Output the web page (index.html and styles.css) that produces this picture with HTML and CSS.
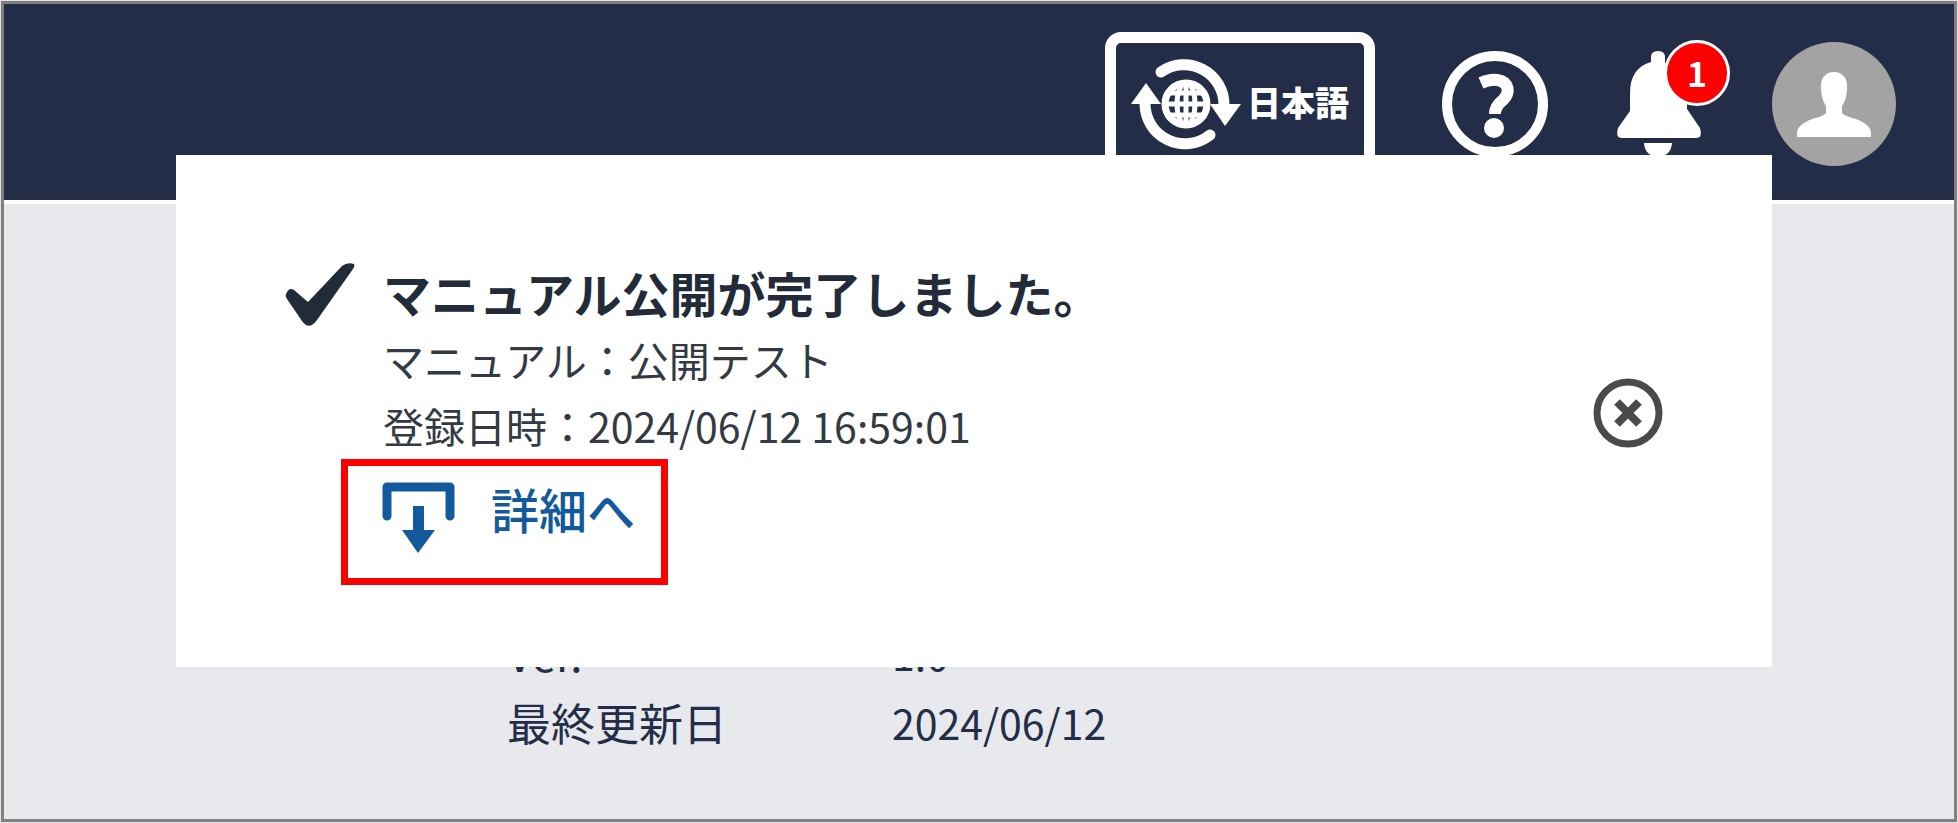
FILE: index.html
```
<!DOCTYPE html>
<html lang="ja">
<head>
<meta charset="utf-8">
<meta name="viewport" content="width=device-width, initial-scale=1">
<title>マニュアル公開</title>
<link rel="stylesheet" href="styles.css">
</head>
<body>
<div class="app">
  <header class="topbar">
    <button class="lang" type="button">
      <svg class="lang-icon" viewBox="0 0 110 92" aria-hidden="true">
        <g fill="none" stroke="#fff">
          <path d="M30 14A40 40 0 0 1 93 47" stroke-width="11" stroke-linecap="round"/>
          <path d="M79 77A40 40 0 0 1 14 45" stroke-width="11" stroke-linecap="round"/>
          <circle cx="55" cy="46" r="21" stroke-width="7"/>
          <ellipse cx="55" cy="46" rx="9" ry="21" stroke-width="5"/>
          <path d="M55 25V67M34 46H76M38 35H72M38 57H72" stroke-width="5"/>
        </g>
        <path d="M0 46L15 25L30 46Z" fill="#fff"/>
        <path d="M79 46H110L94 68Z" fill="#fff"/>
      </svg>
      <span>日本語</span>
    </button>
    <button class="icon-button" type="button" aria-label="ヘルプ">
      <svg class="help-icon" viewBox="0 0 106 106" aria-hidden="true">
        <circle cx="53" cy="53" r="48" fill="none" stroke="#fff" stroke-width="10"/>
        <path d="M39 32Q48 28 55 29C68 31 68 42 61 49Q53 55 53 63" fill="none" stroke="#fff" stroke-width="12"/>
        <circle cx="52" cy="77" r="10" fill="#fff"/>
      </svg>
    </button>
    <button class="icon-button bell" type="button" aria-label="お知らせ">
      <svg class="bell-icon" viewBox="0 0 90 106" aria-hidden="true">
        <path d="M36 6Q36 0 43 0Q50 0 50 6V12Q72 17 72 42V58L85 77Q88 87 81 87H7Q0 87 3 77L15 60V42Q15 17 36 11Z" fill="#fff"/>
        <path d="M29 92H57Q56 105 43 106Q30 105 29 92Z" fill="#fff"/>
      </svg>
      <span class="badge">1</span>
    </button>
    <button class="icon-button" type="button" aria-label="アカウント">
      <svg class="avatar" viewBox="0 0 124 124" aria-hidden="true">
        <circle cx="62" cy="62" r="62" fill="#a3a3a3"/>
        <path d="M62 30C70 30 76 36 75 46Q75 57 70 64V71Q72 74 84 77Q99 83 99 91V95H25V91Q25 83 40 77Q52 74 54 71V64Q49 57 49 46C48 36 54 30 62 30Z" fill="#fff"/>
      </svg>
    </button>
  </header>

  <main class="content">
    <dl class="details">
      <dt>Ver.</dt><dd>1.0</dd>
      <dt>最終更新日</dt><dd>2024/06/12</dd>
    </dl>
  </main>

  <section class="toast" role="status">
    <svg class="check" viewBox="0 0 70 66" aria-hidden="true">
      <path d="M1 32Q4 25 9 28L23 40L57 4Q62 0 69 2Q70 4 68 7L32 58Q24 69 17 59L2 37Q0 34 1 32Z" fill="#222b38"/>
    </svg>
    <div class="toast-body">
      <h1 class="toast-title">マニュアル公開が完了しました。</h1>
      <p class="toast-line">マニュアル：公開テスト</p>
      <p class="toast-line">登録日時：2024/06/12 16:59:01</p>
      <a class="detail-link" href="#">
        <svg class="open-icon" viewBox="0 0 73 72" aria-hidden="true">
          <path d="M5 34V5H68V34" fill="none" stroke="#125a9b" stroke-width="9" stroke-linecap="round" stroke-linejoin="round"/>
          <path d="M31 24H42V48H53L36 71L20 48H31Z" fill="#125a9b"/>
        </svg>
        <span>詳細へ</span>
      </a>
    </div>
    <button class="icon-button close" type="button" aria-label="閉じる">
      <svg class="close-icon" viewBox="0 0 70 70" aria-hidden="true">
        <g fill="none" stroke="#4a4a4a">
          <circle cx="35" cy="35" r="31" stroke-width="7"/>
          <path d="M24 24L46 46M46 24L24 46" stroke-width="8"/>
        </g>
      </svg>
    </button>
  </section>
</div>
</body>
</html>
```
FILE: styles.css
```
* {
  box-sizing: border-box;
}

body {
  margin: 0;
  padding: 1px;
  background: #e4e4e4;
  font-family: "Noto Sans CJK JP", sans-serif;
  color: #333a44;
}

svg {
  display: block;
}

.app {
  position: relative;
  min-height: calc(100vh - 2px);
  border: 3px solid #808080;
  background: #e8e9ed;
}

.topbar {
  display: flex;
  justify-content: flex-end;
  align-items: center;
  gap: 67px;
  padding: 28px 58px 24px;
  border-bottom: 4px solid #fff;
  background: #232d47;
}

.lang {
  display: flex;
  align-items: center;
  gap: 6px;
  height: 144px;
  padding: 0 15px;
  border: 11px solid #fff;
  border-radius: 16px;
  background: none;
  color: #fff;
  font: 900 34px/44px "Noto Sans CJK JP", sans-serif;
}

.lang span {
  padding-bottom: 4px;
}

.lang-icon {
  width: 110px;
  height: 92px;
}

.icon-button {
  padding: 0;
  border: 0;
  background: none;
}

.help-icon {
  width: 106px;
  height: 106px;
}

.bell {
  position: relative;
}

.bell-icon {
  width: 90px;
  height: 106px;
}

.badge {
  position: absolute;
  top: -11px;
  right: -25px;
  width: 66px;
  height: 66px;
  border: 3px solid #fff;
  border-radius: 50%;
  background: #f00;
  color: #fff;
  font: 700 34px/60px "Noto Sans CJK JP", sans-serif;
  text-align: center;
}

.avatar {
  width: 124px;
  height: 124px;
}

.content {
  padding: 415px 40px 56px 503px;
}

.details {
  display: grid;
  grid-template-columns: 385px 1fr;
  margin: 0;
  color: #232d47;
  line-height: 69px;
}

.details dt {
  font-size: 44px;
}

.details dd {
  margin: 0;
  font-size: 41px;
}

.toast {
  position: absolute;
  top: 151px;
  left: 172px;
  right: 182px;
  display: flex;
  align-items: flex-start;
  gap: 28px;
  padding: 0 109px;
  background: #fff;
}

.check {
  flex: none;
  width: 70px;
  height: 66px;
  margin-top: 107px;
}

.toast-body {
  flex: 1;
  padding: 103px 0 82px;
}

.toast-title {
  margin: 0;
  color: #222b38;
  font-size: 48px;
  font-weight: 700;
  line-height: 68px;
}

.toast-line {
  margin: 0;
  font-size: 41px;
  line-height: 66px;
}

.detail-link {
  display: flex;
  align-items: flex-start;
  gap: 36px;
  width: fit-content;
  margin: 1px 0 0 -42px;
  padding: 16px 26px 24px 34px;
  border: 7px solid #f00;
  color: #125a9b;
  font-size: 48px;
  font-weight: 500;
  line-height: 52px;
  text-decoration: none;
}

.open-icon {
  width: 73px;
  height: 72px;
}

.close {
  align-self: center;
  margin-top: 4px;
}

.close-icon {
  width: 70px;
  height: 70px;
}
```
